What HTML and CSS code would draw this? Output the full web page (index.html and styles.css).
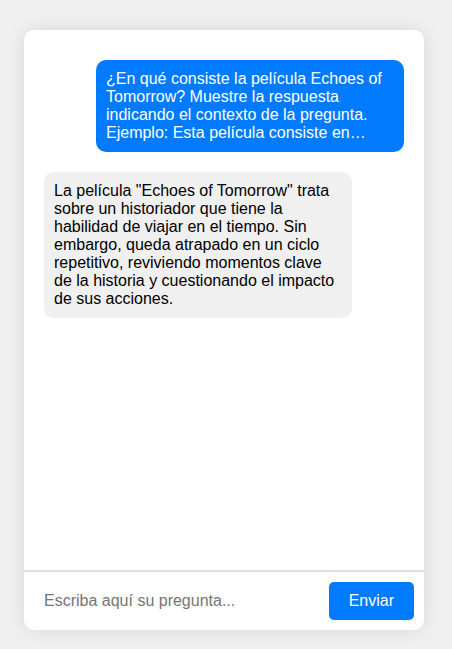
FILE: index.html
```html
<!DOCTYPE html>
<html lang="es">
<head>
<meta charset="utf-8">
<meta name="viewport" content="width=device-width, initial-scale=1">
<title>Chat</title>
<link rel="stylesheet" href="styles.css">
</head>
<body>
<main class="chat">
  <div class="messages">
    <p class="message message-user">¿En qué consiste la película Echoes of Tomorrow? Muestre la respuesta indicando el contexto de la pregunta. Ejemplo: Esta película consiste en…</p>
    <p class="message message-bot">La película "Echoes of Tomorrow" trata sobre un historiador que tiene la habilidad de viajar en el tiempo. Sin embargo, queda atrapado en un ciclo repetitivo, reviviendo momentos clave de la historia y cuestionando el impacto de sus acciones.</p>
  </div>
  <form class="composer">
    <input class="composer-input" type="text" aria-label="Pregunta" placeholder="Escriba aquí su pregunta...">
    <button class="composer-send" type="button">Enviar</button>
  </form>
</main>
</body>
</html>
```
FILE: styles.css
```css
* {
  box-sizing: border-box;
}

body {
  margin: 0;
  min-height: 100vh;
  padding: 30px 28px 19px 24px;
  display: flex;
  justify-content: center;
  background: #f0f0f0;
  font-family: "Liberation Sans", Arial, sans-serif;
  font-size: 16px;
  line-height: 18px;
}

.chat {
  display: flex;
  flex-direction: column;
  width: 100%;
  max-width: 400px;
  background: #fff;
  border-radius: 10px;
  box-shadow: 0 0 20px rgba(0, 0, 0, 0.1);
  overflow: hidden;
}

.messages {
  flex: 1;
  display: flex;
  flex-direction: column;
  gap: 20px;
  padding: 30px 20px;
}

.message {
  margin: 0;
  width: fit-content;
  max-width: 308px;
  padding: 10px;
  border-radius: 10px;
}

.message-user {
  align-self: flex-end;
  background: #007bff;
  color: #fff;
}

.message-bot {
  align-self: flex-start;
  background: #f0f0f0;
  color: #000;
}

.composer {
  display: flex;
  padding: 10px;
  border-top: 2px solid #ddd;
}

.composer-input {
  flex: 1;
  min-width: 0;
  padding: 10px;
  border: 0;
  background: transparent;
  font: inherit;
}

.composer-input::placeholder {
  color: #757575;
}

.composer-send {
  padding: 10px 20px;
  border: 0;
  border-radius: 5px;
  background: #007bff;
  color: #fff;
  font: inherit;
}
```
